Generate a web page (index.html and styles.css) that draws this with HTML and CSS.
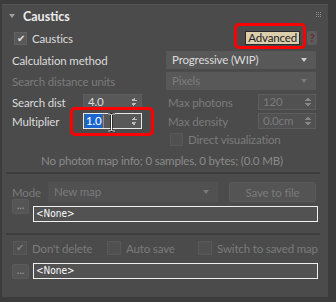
FILE: index.html
```html
<!DOCTYPE html>
<html lang="en">
<head>
    <meta charset="UTF-8">
    <title>Caustics</title>
    <link rel="stylesheet" href="styles.css">
</head>
<body>
    <div class="panel">
        <div class="head">
            <span class="tri"></span>
            <span class="title">Caustics</span>
            <span class="grip"></span>
        </div>

        <div class="row r-top">
            <div class="check"><span class="box on">&#10004;</span>Caustics</div>
            <div class="adv-wrap">
                <span class="adv">Advanced</span>
                <span class="help">?</span>
                <span class="mark mark-adv"></span>
            </div>
        </div>

        <div class="row r-sel">
            <span class="lbl">Calculation method</span>
            <div class="select">Progressive (WIP)<span class="arrow"></span></div>
        </div>

        <div class="row r-sel off">
            <span class="lbl">Search distance units</span>
            <div class="select">Pixels<span class="arrow"></span></div>
        </div>

        <div class="row pair r-spin1">
            <span class="lbl">Search dist</span>
            <div class="spin">4.0<span class="updown"></span></div>
            <span></span>
            <span class="lbl off">Max photons</span>
            <div class="spin off">120<span class="updown"></span></div>
        </div>

        <div class="row pair r-spin2">
            <span class="lbl">Multiplier</span>
            <div class="spin focus"><span class="sel">1.0</span><span class="caret"></span><span class="updown"></span>
                <svg class="ibeam" width="9" height="19" viewBox="0 0 9 19">
                    <path d="M1 1h2.5l1 1 1-1H8M4.5 2v15M1 18h2.5l1-1 1 1H8" fill="none" stroke="#111" stroke-width="2.2"/>
                    <path d="M1 1h2.5l1 1 1-1H8M4.5 2v15M1 18h2.5l1-1 1 1H8" fill="none" stroke="#fff" stroke-width="1"/>
                </svg>
            </div>
            <span></span>
            <span class="lbl off">Max density</span>
            <div class="spin off">0.0cm<span class="updown"></span></div>
            <span class="mark mark-mult"></span>
        </div>

        <div class="row r-direct off">
            <div class="check"><span class="box"></span>Direct visualization</div>
        </div>

        <div class="info">No photon map info; 0 samples, 0 bytes; (0.0 MB)</div>

        <div class="sep"></div>

        <div class="row r-mode off">
            <span class="lbl mode-lbl">Mode</span>
            <div class="select mode-sel">New map<span class="arrow"></span></div>
            <div class="btn">Save to file</div>
        </div>

        <div class="row r-file r-file1">
            <div class="dots">...</div>
            <div class="field">&lt;None&gt;</div>
        </div>

        <div class="sep sep2"></div>

        <div class="row r-checks off">
            <div class="check"><span class="box on">&#10004;</span>Don't delete</div>
            <div class="check"><span class="box"></span>Auto save</div>
            <div class="check"><span class="box"></span>Switch to saved map</div>
        </div>

        <div class="row r-file r-file2">
            <div class="dots">...</div>
            <div class="field">&lt;None&gt;</div>
        </div>
    </div>
</body>
</html>
```

FILE: styles.css
```css
body {
    margin: 0;
    background-color: #3c3c3c;
    font-family: Lato, "Liberation Sans", sans-serif;
    font-size: 11.5px;
    letter-spacing: -0.15px;
    color: #dcdcdc;
}
.panel {
    margin: 4px 8px 0 2px;
    width: 306px;
    height: 292px;
    padding: 0 10px;
    background-color: #4b4b4b;
    border-top: 1px solid #555;
    box-sizing: content-box;
    position: relative;
}
.head {
    height: 22px;
    display: flex;
    align-items: center;
    margin-left: -10px;
    position: relative;
}
.tri {
    width: 0;
    height: 0;
    margin-left: 7px;
    border-left: 3px solid transparent;
    border-right: 3px solid transparent;
    border-top: 4px solid #a0a0a0;
}
.title {
    margin-left: 8px;
    font-weight: bold;
    font-size: 12.5px;
    letter-spacing: 0;
    color: #ececec;
}
.grip {
    position: absolute;
    right: -3px;
    top: 7px;
    width: 5px;
    height: 5px;
    background-image: linear-gradient(90deg, transparent 1px, #4b4b4b 1px),
                      linear-gradient(transparent 1px, #4b4b4b 1px);
    background-color: #8e8e8e;
    background-size: 2px 2px;
}
.row {
    display: flex;
    align-items: center;
    position: relative;
}
.off {
    color: #7b7b7b;
}
.r-top {
    height: 16px;
    margin-top: 3px;
    justify-content: space-between;
}
.check {
    display: flex;
    align-items: center;
    white-space: nowrap;
}
.box {
    width: 11px;
    height: 11px;
    border: 1px solid #626262;
    background-color: #585858;
    margin-right: 5px;
    font-size: 10px;
    line-height: 11px;
    text-align: center;
    color: #e0e0e0;
}
.off .box {
    background-color: #505050;
    border-color: #585858;
    color: #7d7d7d;
}
.r-top .check {
    margin-left: 2px;
}
.adv-wrap {
    display: flex;
    align-items: center;
    position: relative;
    margin-right: 1px;
}
.adv {
    background-color: #dccfad;
    color: #222;
    border: 1px solid #2a2a2a;
    height: 12px;
    line-height: 12px;
    padding: 0 2px;
}
.help {
    margin-left: 7px;
    width: 10px;
    height: 14px;
    background-color: #5c5c5c;
    color: #6e2a2a;
    font-weight: bold;
    text-align: center;
    line-height: 14px;
    border-radius: 2px;
}
.mark {
    position: absolute;
    border: 3px solid #f00;
    border-radius: 5px;
}
.mark-adv {
    left: -11px;
    top: -8px;
    width: 66px;
    height: 20px;
}
.mark-mult {
    left: 58px;
    top: -6px;
    width: 78px;
    height: 23px;
}
.r-sel {
    height: 18px;
    margin-top: 5px;
}
.r-sel + .r-sel {
    margin-top: 3px;
}
.select {
    margin-left: auto;
    margin-right: 2px;
    width: 144px;
    height: 18px;
    line-height: 18px;
    padding-left: 6px;
    background-color: #585858;
    position: relative;
    box-sizing: content-box;
}
.arrow {
    position: absolute;
    right: 9px;
    top: 7px;
    border-left: 3px solid transparent;
    border-right: 3px solid transparent;
    border-top: 4px solid #d0d0d0;
}
.off .arrow {
    border-top-color: #7a7a7a;
}
.pair {
    display: grid;
    grid-template-columns: 71px 59px 26px 90px 58px;
    align-items: center;
    height: 16px;
}
.r-spin1 {
    margin-top: 4px;
}
.r-spin2 {
    margin-top: 3px;
}
.spin {
    height: 16px;
    line-height: 16px;
    box-sizing: border-box;
    padding-left: 4px;
    background-color: #585858;
    border: 1px solid #5d5d5d;
    position: relative;
    display: flex;
    align-items: center;
}
.spin.off {
    background-color: #515151;
}
.updown {
    position: absolute;
    right: 4px;
    top: 3px;
    width: 6px;
    height: 8px;
    background:
        linear-gradient(to bottom right, transparent 50%, #bbb 50%) left top / 3px 3px no-repeat,
        linear-gradient(to bottom left, transparent 50%, #bbb 50%) right top / 3px 3px no-repeat,
        linear-gradient(to top right, transparent 50%, #bbb 50%) left bottom / 3px 3px no-repeat,
        linear-gradient(to top left, transparent 50%, #bbb 50%) right bottom / 3px 3px no-repeat;
}
.off .updown {
    opacity: 0.5;
}
.focus {
    border-color: #e8e8e8;
    padding-left: 1px;
}
.sel {
    background-color: #1a66d0;
    color: #fff;
    padding: 0 1px;
    line-height: 14px;
}
.caret {
    width: 1px;
    height: 13px;
    background-color: #d08030;
}
.ibeam {
    position: absolute;
    left: 23px;
    top: -1px;
}
.r-direct {
    height: 13px;
    margin-top: 4px;
    padding-left: 158px;
}
.info {
    margin-top: 8px;
    height: 14px;
    line-height: 14px;
    text-align: center;
    color: #8a8a8a;
    padding-right: 6px;
}
.sep {
    margin: 4px -2px 0 -6px;
    height: 2px;
    background-color: #3d3d3d;
}
.r-mode {
    margin-top: 8px;
    height: 20px;
}
.mode-lbl {
    width: 36px;
}
.mode-sel {
    margin-left: 0;
    margin-right: 0;
    width: 164px;
    height: 20px;
    line-height: 20px;
    background-color: #515151;
}
.mode-sel .arrow {
    top: 8px;
}
.btn {
    margin-left: 11px;
    width: 87px;
    height: 20px;
    line-height: 20px;
    text-align: center;
    background-color: #545454;
    border: 1px solid #5a5a5a;
    box-sizing: border-box;
    border-radius: 2px;
}
.r-file {
    align-items: flex-start;
}
.r-file1 {
    margin-top: -3px;
}
.dots {
    width: 17px;
    height: 15px;
    line-height: 9px;
    text-align: center;
    background-color: #555;
    border: 1px solid #5b5b5b;
    box-sizing: border-box;
    border-radius: 2px;
    color: #9a9a9a;
    font-size: 11px;
}
.field {
    margin-left: 4px;
    flex: 1;
    height: 16px;
    line-height: 14px;
    box-sizing: border-box;
    border: 1px solid #f0f0f0;
    background-color: #525252;
    color: #fff;
    font-family: "DejaVu Sans Condensed", "DejaVu Sans", sans-serif;
    font-size: 10px;
    letter-spacing: 0;
    padding-left: 2px;
}
.r-file1 .field {
    margin-top: 7px;
}
.sep2 {
    margin-top: 11px;
}
.r-checks {
    margin-top: 6px;
    height: 14px;
    display: grid;
    grid-template-columns: 94px 91px auto;
    padding-left: 1px;
}
.r-checks .box {
    width: 12px;
    height: 12px;
}
.r-file2 {
    margin-top: 8px;
}
.r-file2 .dots {
    margin-top: 1px;
}
```
